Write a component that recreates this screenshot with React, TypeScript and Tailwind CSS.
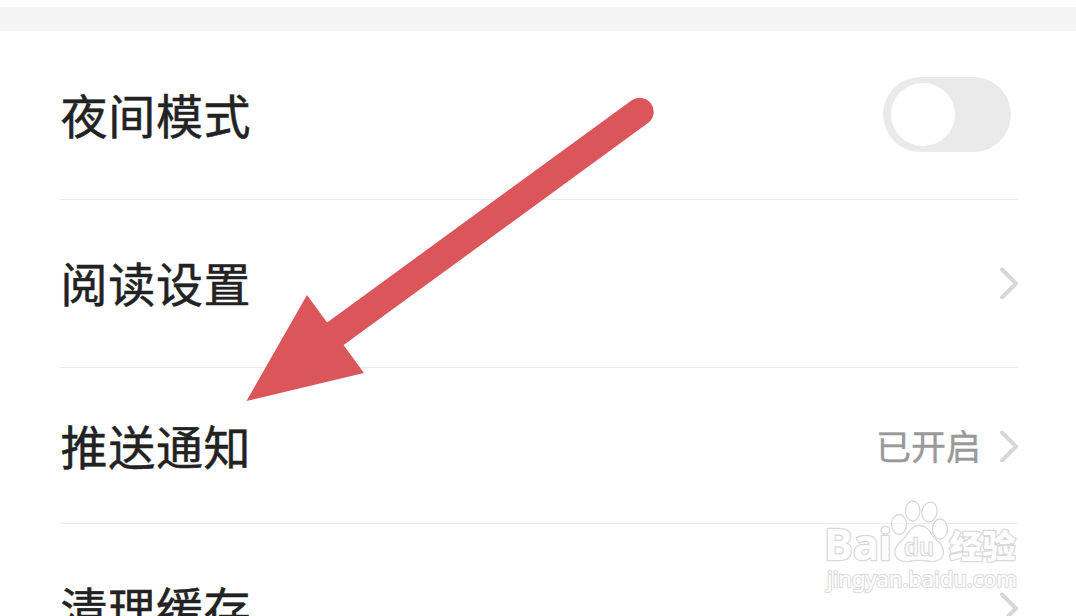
import { clsx } from 'clsx'

type SettingItem = {
  label: string
  value?: string
  toggle?: boolean
  className: string
}

const SETTINGS: SettingItem[] = [
  { label: '夜间模式', toggle: true, className: 'h-[168.5px]' },
  { label: '阅读设置', className: 'h-[168.5px]' },
  { label: '推送通知', value: '已开启', className: 'h-[156px]' },
  { label: '清理缓存', className: 'h-[168px]' },
]

function Chevron() {
  return (
    <svg viewBox="0 0 20 32" className="-mr-px h-8 w-5" fill="none" aria-hidden="true">
      <path d="M3 2.5 L17 16.5 L3 30.5" stroke="#d7d7d7" strokeWidth="4" strokeLinecap="round" strokeLinejoin="round" />
    </svg>
  )
}

function Toggle() {
  return (
    <button
      type="button"
      role="switch"
      aria-checked="false"
      className="mr-[7px] flex h-[75px] w-32 items-center rounded-full bg-[#eaeaea] pl-2"
    >
      <span className="h-[63px] w-16 rounded-full bg-white" />
    </button>
  )
}

function SettingRow({ item }: { item: SettingItem }) {
  return (
    <li className={clsx('flex shrink-0 items-center justify-between border-b border-[#ebebeb]', item.className)}>
      <span className="pb-[3px] pl-[0.5px] text-[47px] leading-none tracking-[0.7px] text-[#222222] [-webkit-text-stroke:0.5px_#222222]">
        {item.label}
      </span>
      {item.toggle ? (
        <Toggle />
      ) : (
        <span className="flex items-center gap-[18px]">
          {item.value && (
            <span className="pb-0.5 text-[35px] leading-none text-[#999999] [-webkit-text-stroke:0.4px_#999999]">
              {item.value}
            </span>
          )}
          <Chevron />
        </span>
      )}
    </li>
  )
}

function PointerArrow() {
  return (
    <svg className="pointer-events-none absolute top-0 left-0" width="1076" height="616" aria-hidden="true">
      <path d="M246.5 401 L307 295 L364 373 Z" fill="#db565b" />
      <path d="M333 335.5 L639.7 111.8" stroke="#db565b" strokeWidth="28" strokeLinecap="round" />
    </svg>
  )
}

function Watermark() {
  return (
    <svg
      className="pointer-events-none absolute top-[490px] left-[800px]"
      width="240"
      height="126"
      fill="#ffffff"
      stroke="#d9d9d9"
      strokeWidth="1.3"
      strokeLinejoin="round"
    >
      <text
        x="24"
        y="70"
        fontSize="43"
        fontWeight="bold"
        fontFamily="Open Sans, sans-serif"
        strokeWidth="2.6"
        paintOrder="stroke"
        textLength="68"
        lengthAdjust="spacingAndGlyphs"
      >
        Bai
      </text>
      <g fillOpacity="0.5">
        <ellipse cx="99" cy="34.5" rx="7.5" ry="10" />
        <ellipse cx="112.7" cy="21" rx="7.2" ry="10" />
        <ellipse cx="129.5" cy="22" rx="7.5" ry="10" transform="rotate(10 129.5 22)" />
        <ellipse cx="140" cy="39" rx="7.5" ry="10" />
      </g>
      <path d="M119.5 35.5 C126 35.5 129 40 132 45 C136 51 143.5 53 143.5 62 C143 69 137 72.5 130 71.5 C123 70 116 70 109 71.5 C101 72.5 95 69 95 62 C95 54 102 52 106 46 C110 41 112 35.5 119.5 35.5 Z" />
      <text
        x="104"
        y="65.5"
        fontSize="25"
        fontWeight="bold"
        fontFamily="Liberation Sans, sans-serif"
        strokeWidth="1.1"
        textLength="30"
        lengthAdjust="spacingAndGlyphs"
      >
        du
      </text>
      <text
        x="149.5"
        y="67.5"
        fontSize="32"
        fontWeight="900"
        fontFamily="Noto Sans CJK SC, sans-serif"
        strokeWidth="2.6"
        paintOrder="stroke"
        textLength="66"
        lengthAdjust="spacingAndGlyphs"
      >
        经验
      </text>
      <text
        x="27"
        y="96.5"
        fontSize="22"
        fontFamily="Noto Sans, sans-serif"
        stroke="#dedede"
        strokeWidth="2.4"
        paintOrder="stroke"
        textLength="190"
        lengthAdjust="spacingAndGlyphs"
      >
        jingyan.baidu.com
      </text>
    </svg>
  )
}

export default function App() {
  return (
    <main className="relative flex h-[616px] w-[1076px] flex-col overflow-hidden bg-white pt-[7px] font-['Noto_Sans_CJK_SC',sans-serif]">
      <div className="h-6 shrink-0 bg-[#f4f4f4]" />
      <ul className="flex flex-col pr-[58px] pl-[60px]">
        {SETTINGS.map((item) => (
          <SettingRow key={item.label} item={item} />
        ))}
      </ul>
      <PointerArrow />
      <Watermark />
    </main>
  )
}
